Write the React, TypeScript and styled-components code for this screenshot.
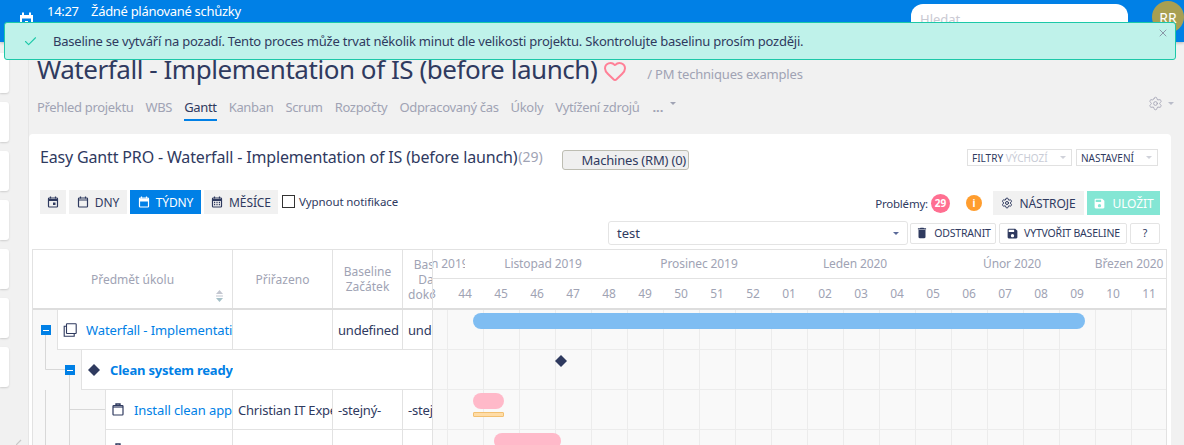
import * as React from 'react';
import styled, { createGlobalStyle } from 'styled-components';
import { Check, Heart, Settings, X } from 'lucide-react';
import { MdDelete, MdSave } from 'react-icons/md';

const navy = '#2f3a5f';
const muted = '#a0a3b4';
const blue = '#0080e6';
const line = '#e2e2e2';

const GlobalStyle = createGlobalStyle`
  html, body {
    margin: 0;
    padding: 0;
    background: #f1f1f1;
  }
  * {
    box-sizing: border-box;
  }
  body {
    font-family: "Noto Sans", "Open Sans", sans-serif;
    font-size: 13px;
    color: ${navy};
  }
`;

const Page = styled.div`
  position: relative;
  width: 1184px;
  height: 445px;
  overflow: hidden;
  background: #f1f1f1;
`;

const TopBar = {
  Container: styled.header`
    display: flex;
    align-items: flex-start;
    height: 42px;
    padding-left: 19px;
    background: ${blue};
    box-shadow: 0 1px 3px rgba(0, 0, 0, 0.25);
    color: #fff;
  `,
  Calendar: styled.svg`
    flex: none;
    margin-top: 12px;
  `,
  Agenda: styled.div`
    display: grid;
    grid-template-columns: 44px auto;
    margin-left: 13px;
    padding-top: 2px;
    line-height: 18px;
    font-size: 13px;
    letter-spacing: -0.3px;
  `,
  Search: styled.div`
    width: 217px;
    height: 34px;
    margin: 4px 24px 0 auto;
    padding: 5px 9px;
    border-radius: 12px;
    background: #fff;
    color: #c9c9d2;
    font-size: 13px;
    line-height: 20px;
  `,
  Avatar: styled.div`
    display: flex;
    align-items: center;
    justify-content: center;
    flex: none;
    width: 32px;
    height: 32px;
    margin: 1px 0 0 0;
    border-radius: 50%;
    background: #a89f52;
    color: #fff;
    font-size: 14px;
  `,
};

const Alert = {
  Box: styled.div`
    position: absolute;
    top: 22px;
    left: 4px;
    display: flex;
    align-items: center;
    width: 1172px;
    height: 38px;
    padding-left: 18px;
    border: 1px solid #1cc8a8;
    border-radius: 3px;
    background: #bff2ea;
    color: ${navy};
    letter-spacing: -0.22px;
  `,
  Text: styled.span`
    margin-left: 15px;
  `,
  Close: styled.span`
    position: absolute;
    top: 4px;
    right: 6px;
    display: flex;
    color: #8a97a8;
  `,
};

const Body = styled.div`
  display: flex;
  height: 403px;
`;

const Sidebar = {
  Container: styled.aside`
    position: relative;
    flex: none;
    width: 29px;
    padding-top: 11px;
    border-right: 1px solid #e6e6e6;
  `,
  Item: styled.div`
    width: 9px;
    height: 40px;
    margin-bottom: 9px;
    border-radius: 0 3px 3px 0;
    background: #fff;
    box-shadow: 0 1px 2px rgba(0, 0, 0, 0.15);
  `,
  Resize: styled.svg`
    position: absolute;
    left: 16px;
    bottom: 0;
  `,
};

const Main = styled.main`
  flex: 1;
  min-width: 0;
`;

const PageHead = {
  Row: styled.div`
    display: flex;
    align-items: center;
    height: 36px;
    margin: 9px 0 0 8px;
  `,
  Title: styled.h1`
    margin: 0;
    font-size: 26px;
    font-weight: 400;
    line-height: 36px;
    letter-spacing: -0.45px;
    white-space: nowrap;
  `,
  Favourite: styled.span`
    display: flex;
    margin: 4px 0 0 6px;
    color: #ff8097;
  `,
  Path: styled.span`
    margin: 9px 0 0 20px;
    color: ${muted};
    font-size: 13px;
    letter-spacing: -0.2px;
  `,
};

const Tabs = {
  Row: styled.nav`
    display: flex;
    align-items: flex-start;
    gap: 12px;
    height: 38px;
    margin: 8px 0 0 8px;
    padding-right: 10px;
  `,
  Tab: styled.span<{ $active?: boolean }>`
    height: 26px;
    padding-top: 3px;
    border-bottom: 2px solid ${(p) => (p.$active ? blue : 'transparent')};
    color: ${(p) => (p.$active ? navy : muted)};
    line-height: 18px;
    letter-spacing: -0.33px;
    white-space: nowrap;
  `,
  More: styled.span`
    margin-left: 1px;
    color: ${muted};
    font-weight: 700;
    line-height: 24px;
  `,
  MoreCaret: styled.span`
    display: flex;
    margin: 7px 0 0 -5px;
  `,
  Settings: styled.span`
    display: flex;
    align-items: center;
    gap: 5px;
    margin: 1px 0 0 auto;
    color: #a8a8b8;
  `,
};

const Caret = styled.i<{ $color?: string }>`
  display: inline-block;
  flex: none;
  width: 0;
  height: 0;
  border-left: 3px solid transparent;
  border-right: 3px solid transparent;
  border-top: 3px solid ${(p) => p.$color ?? '#b9bcc9'};
`;

const Card = styled.section`
  height: 320px;
  margin: 1px 13px 0 0;
  border-radius: 4px 4px 0 0;
  background: #fff;
  overflow: hidden;
`;

const CardHead = {
  Row: styled.div`
    display: flex;
    align-items: flex-start;
    height: 56px;
    padding: 0 13px 0 11px;
  `,
  Title: styled.h2`
    margin: 13px 0 0;
    font-size: 16px;
    font-weight: 400;
    line-height: 20px;
    letter-spacing: -0.16px;
    white-space: nowrap;
  `,
  Count: styled.span`
    margin: 13px 0 0 1px;
    color: ${muted};
    font-size: 14px;
    line-height: 20px;
  `,
  Machines: styled.button`
    width: 127px;
    height: 20px;
    margin: 16px 0 0 19px;
    padding: 0 0 0 17px;
    border: 1px solid #bdbdb2;
    border-radius: 3px;
    background: #efefef;
    color: ${navy};
    font: inherit;
    letter-spacing: -0.2px;
    white-space: nowrap;
  `,
  Select: styled.div<{ $w: number; $first?: boolean }>`
    display: flex;
    align-items: center;
    justify-content: space-between;
    width: ${(p) => p.$w}px;
    height: 17px;
    margin: 15px 0 0 ${(p) => (p.$first ? 'auto' : '4px')};
    padding: 0 5px 0 4px;
    border: 1px solid #e1e1e1;
    color: ${navy};
    font-size: 10px;
    white-space: nowrap;
  `,
  Faint: styled.span`
    color: #c9ccd6;
  `,
};

const Toolbar = styled.div`
  display: flex;
  align-items: flex-start;
  height: 25px;
  padding: 0 11px;
`;

const ToolbarEnd = styled.div`
  display: flex;
  align-items: center;
  height: 24px;
  margin: 1px 0 0 auto;
`;

const ToolButton = styled.button<{ $w: number; $active?: boolean; $save?: boolean; $gap?: number }>`
  display: flex;
  align-items: center;
  justify-content: center;
  gap: 6px;
  flex: none;
  width: ${(p) => p.$w}px;
  height: 24px;
  margin-right: ${(p) => p.$gap ?? 3}px;
  padding: 0;
  border: 0;
  background: ${(p) => (p.$active ? blue : p.$save ? '#84e6d4' : '#f1f1f1')};
  color: ${(p) => (p.$active || p.$save ? '#fff' : navy)};
  font: inherit;
  font-size: 12px;
  letter-spacing: -0.1px;
`;

const Notify = styled.label`
  display: flex;
  align-items: center;
  gap: 4px;
  height: 23px;
  margin-left: 1px;
  font-size: 11.5px;
  letter-spacing: -0.1px;
`;

const NotifyBox = styled.span`
  width: 13px;
  height: 13px;
  border: 1px solid #333;
`;

const Problems = styled.span`
  font-size: 11.5px;
  letter-spacing: -0.2px;
`;

const Badge = styled.span<{ $color: string; $size: number }>`
  display: flex;
  align-items: center;
  justify-content: center;
  flex: none;
  width: ${(p) => p.$size}px;
  height: ${(p) => p.$size}px;
  border-radius: 50%;
  background: ${(p) => p.$color};
  color: #fff;
  font-size: 10px;
  font-weight: 700;
`;

const ProblemBadge = styled(Badge)`
  margin: 0 16px 0 3px;
`;

const InfoBadge = styled(Badge)`
  margin-right: 11px;
`;

const BaselineRow = styled.div`
  display: flex;
  align-items: center;
  justify-content: flex-end;
  height: 24px;
  margin-top: 6px;
  padding: 0 11px 0 0;
`;

const BaselineSelect = styled.div`
  display: flex;
  align-items: center;
  justify-content: space-between;
  width: 300px;
  height: 24px;
  margin-right: 2px;
  padding: 0 8px;
  border: 1px solid #e4e4e4;
  border-radius: 3px;
  font-size: 13px;
`;

const OutlineButton = styled.button<{ $w: number }>`
  display: flex;
  align-items: center;
  justify-content: center;
  gap: 5px;
  flex: none;
  width: ${(p) => p.$w}px;
  height: 21px;
  margin-left: 3px;
  padding: 0;
  border: 1px solid #e4e4e4;
  border-radius: 2px;
  background: #fff;
  color: ${navy};
  font: inherit;
  font-size: 10.5px;
  letter-spacing: -0.2px;
  white-space: nowrap;
  &:first-of-type {
    margin-left: 0;
  }
`;

const Chart = styled.div`
  display: flex;
  margin: 4px 4px 0 3px;
  border-top: 1px solid ${line};
  border-right: 1px solid ${line};
`;

const TableSide = styled.div`
  flex: none;
  width: 400px;
  overflow: hidden;
  border-left: 1px solid ${line};
`;

const columns = '200px 100px 70px 70px';

const Head = {
  Row: styled.div`
    display: grid;
    grid-template-columns: ${columns};
    height: 60px;
    border-bottom: 2px solid #ddd;
  `,
  Cell: styled.div`
    position: relative;
    display: flex;
    align-items: center;
    justify-content: center;
    border-right: 1px solid ${line};
    color: ${muted};
    font-size: 12px;
    line-height: 15px;
    text-align: center;
    overflow: hidden;
  `,
  Sort: styled.svg`
    position: absolute;
    right: 8px;
    bottom: 6px;
  `,
};

const Tree = {
  Body: styled.div`
    position: relative;
    background: #f8f8f8;
  `,
  Guides: styled.svg`
    position: absolute;
    top: 0;
    left: 0;
  `,
  Row: styled.div`
    display: grid;
    grid-template-columns: ${columns};
    height: 40px;
  `,
  Name: styled.div<{ $depth: number; $span?: boolean }>`
    position: relative;
    display: flex;
    align-items: center;
    gap: ${(p) => (p.$depth > 0 ? 10 : 9)}px;
    grid-column: ${(p) => (p.$span ? '1 / -1' : 'auto')};
    margin-left: ${(p) => 24 + p.$depth * 24}px;
    padding-left: ${(p) => (p.$depth > 0 ? 6 : 5)}px;
    border-left: 1px solid ${line};
    border-bottom: 1px solid ${line};
    border-right: 1px solid ${line};
    background: #fff;
    min-width: 0;
    & > svg {
      flex: none;
    }
  `,
  Link: styled.a<{ $bold?: boolean }>`
    color: ${blue};
    font-weight: ${(p) => (p.$bold ? 700 : 400)};
    letter-spacing: ${(p) => (p.$bold ? '-0.2px' : '-0.1px')};
    white-space: nowrap;
    overflow: hidden;
  `,
  Toggle: styled.span`
    position: absolute;
    top: 15px;
    left: -17px;
    display: flex;
    align-items: center;
    justify-content: center;
    width: 10px;
    height: 10px;
    background: ${blue};
    &::after {
      content: '';
      width: 6px;
      height: 1px;
      background: #fff;
    }
  `,
  Cell: styled.div`
    display: flex;
    align-items: center;
    padding-left: 5px;
    border-right: 1px solid ${line};
    border-bottom: 1px solid ${line};
    background: #fff;
    font-size: 13px;
    letter-spacing: -0.2px;
    white-space: nowrap;
    overflow: hidden;
  `,
};

const GanttSide = styled.div`
  flex: 1;
  min-width: 0;
  overflow: hidden;
  border-left: 1px solid ${line};
`;

const Timeline = {
  Strip: styled.div`
    width: 756px;
    margin-left: -22px;
    background: #fff;
  `,
  Months: styled.div`
    display: flex;
    height: 29px;
    border-bottom: 1px solid ${line};
  `,
  Month: styled.div<{ $w: number }>`
    flex: none;
    width: ${(p) => p.$w}px;
    overflow: hidden;
    color: ${muted};
    font-size: 12px;
    line-height: 28px;
    text-align: center;
    white-space: nowrap;
    letter-spacing: -0.1px;
  `,
  Weeks: styled.div`
    display: flex;
    height: 31px;
    border-bottom: 2px solid #ddd;
  `,
  Week: styled.div`
    flex: none;
    width: 36px;
    color: ${muted};
    font-size: 12px;
    line-height: 29px;
    text-align: center;
  `,
};

const GanttBody = styled.div`
  position: relative;
  height: 140px;
  background-color: #f9f9f9;
  background-image:
    linear-gradient(to right, #ececec 1px, transparent 1px),
    linear-gradient(to bottom, #ececec 1px, transparent 1px);
  background-size: 36px 100%, 100% 40px;
  background-position: 14px 0, 0 39px;
`;

const Bar = styled.div<{ $left: number; $top: number; $w: number; $color: string }>`
  position: absolute;
  left: ${(p) => p.$left}px;
  top: ${(p) => p.$top}px;
  width: ${(p) => p.$w}px;
  height: 16px;
  border-radius: 8px;
  background: ${(p) => p.$color};
`;

const BaselineBar = styled.div<{ $left: number; $top: number; $w: number }>`
  position: absolute;
  left: ${(p) => p.$left}px;
  top: ${(p) => p.$top}px;
  width: ${(p) => p.$w}px;
  height: 5px;
  border: 1px solid #f2c071;
  border-radius: 1px;
  background: #ffdca6;
`;

const Milestone = styled.svg<{ $left: number; $top: number }>`
  position: absolute;
  left: ${(p) => p.$left}px;
  top: ${(p) => p.$top}px;
`;

type CalendarKind = 'today' | 'day' | 'week' | 'month';

const CalendarIcon = ({ kind, size = 12 }: { kind: CalendarKind; size?: number }) => (
  <svg width={size} height={size} viewBox="0 0 12 12" fill="none" stroke="currentColor">
    <rect x="1.5" y="2" width="9" height="9" rx="0.8" strokeWidth="1.2" />
    <path d="M3.5 0.5v2M8.5 0.5v2" strokeWidth="1.2" />
    <path d="M1.5 4h9" strokeWidth={kind === 'day' ? 1.2 : 1.8} />
    {kind === 'today' && <rect x="6" y="6.5" width="2.5" height="2.5" fill="currentColor" stroke="none" />}
    {kind === 'week' && <rect x="1.5" y="2.5" width="9" height="3" fill="currentColor" stroke="none" />}
    {kind === 'month' && (
      <path d="M3 6.5h1.2M5.4 6.5h1.2M7.8 6.5h1.2M3 8.7h1.2M5.4 8.7h1.2M7.8 8.7h1.2" strokeWidth="1.3" />
    )}
  </svg>
);

const ClipboardIcon = () => (
  <svg width="12" height="13" viewBox="0 0 12 13" fill="none" stroke={navy} strokeWidth="1.2">
    <rect x="1" y="2.5" width="10" height="9.5" rx="0.8" />
    <path d="M4 2.5V1h4v1.5" strokeWidth="1.4" />
    <path d="M1 4h10" />
  </svg>
);

const CopyIcon = () => (
  <svg width="14" height="14" viewBox="0 0 14 14" fill="none" stroke={navy} strokeWidth="1.1">
    <rect x="3.5" y="0.8" width="9.7" height="9.7" rx="0.6" />
    <path d="M3.5 3.2H1.2v10h10V10.5" />
  </svg>
);

const DiamondPath = () => <path d="M6 0L12 6L6 12L0 6Z" fill={navy} />;

const months = [
  { label: 'Říjen 2019', w: 54 },
  { label: 'Listopad 2019', w: 156 },
  { label: 'Prosinec 2019', w: 156 },
  { label: 'Leden 2020', w: 156 },
  { label: 'Únor 2020', w: 158 },
  { label: 'Březen 2020', w: 76 },
];

const weeks = ['43', '44', '45', '46', '47', '48', '49', '50', '51', '52', '01', '02', '03', '04', '05', '06', '07', '08', '09', '10', '11'];

const tabs = ['Přehled projektu', 'WBS', 'Gantt', 'Kanban', 'Scrum', 'Rozpočty', 'Odpracovaný čas', 'Úkoly', 'Vytížení zdrojů'];

const App = () => {
  return (
    <Page>
      <GlobalStyle />
      <TopBar.Container>
        <TopBar.Calendar width="15" height="18" viewBox="0 0 15 18" fill="#fff">
          <path d="M1 3h13v14H1zM3 6.500v8.500h9V6.500z" fillRule="evenodd" />
          <rect x="3" y="0.500" width="2" height="3" />
          <rect x="10" y="0.500" width="2" height="3" />
          <rect x="6" y="9" width="3" height="3" />
        </TopBar.Calendar>
        <TopBar.Agenda>
          <span>14:27</span>
          <span>Žádné plánované schůzky</span>
        </TopBar.Agenda>
        <TopBar.Search>Hledat</TopBar.Search>
        <TopBar.Avatar>RR</TopBar.Avatar>
      </TopBar.Container>

      <Body>
        <Sidebar.Container>
          {[0, 1, 2, 3, 4, 5, 6].map((n) => (
            <Sidebar.Item key={n} />
          ))}
          <Sidebar.Resize width="6" height="6" viewBox="0 0 6 6">
            <path d="M0 6L5 1" stroke="#c8c8c8" strokeWidth="1.2" />
          </Sidebar.Resize>
        </Sidebar.Container>

        <Main>
          <PageHead.Row>
            <PageHead.Title>Waterfall - Implementation of IS (before launch)</PageHead.Title>
            <PageHead.Favourite>
              <Heart size={24} strokeWidth={2} />
            </PageHead.Favourite>
            <PageHead.Path>/ PM techniques examples</PageHead.Path>
          </PageHead.Row>

          <Tabs.Row>
            {tabs.map((tab) => (
              <Tabs.Tab key={tab} $active={tab === 'Gantt'}>
                {tab}
              </Tabs.Tab>
            ))}
            <Tabs.More>...</Tabs.More>
            <Tabs.MoreCaret>
              <Caret $color="#a0a3b4" />
            </Tabs.MoreCaret>
            <Tabs.Settings>
              <Settings size={15} strokeWidth={1.5} />
              <Caret />
            </Tabs.Settings>
          </Tabs.Row>

          <Card>
            <CardHead.Row>
              <CardHead.Title>Easy Gantt PRO - Waterfall - Implementation of IS (before launch)</CardHead.Title>
              <CardHead.Count>(29)</CardHead.Count>
              <CardHead.Machines>Machines (RM) (0)</CardHead.Machines>
              <CardHead.Select $w={105} $first>
                <span>
                  FILTRY <CardHead.Faint>VÝCHOZÍ</CardHead.Faint>
                </span>
                <Caret $color="#d0d2da" />
              </CardHead.Select>
              <CardHead.Select $w={82}>
                <span>NASTAVENÍ</span>
                <Caret $color="#d0d2da" />
              </CardHead.Select>
            </CardHead.Row>

            <Toolbar>
              <ToolButton $w={26}>
                <CalendarIcon kind="today" />
              </ToolButton>
              <ToolButton $w={58}>
                <CalendarIcon kind="day" />
                DNY
              </ToolButton>
              <ToolButton $w={71} $active>
                <CalendarIcon kind="week" />
                TÝDNY
              </ToolButton>
              <ToolButton $w={74}>
                <CalendarIcon kind="month" />
                MĚSÍCE
              </ToolButton>
              <Notify>
                <NotifyBox />
                Vypnout notifikace
              </Notify>
              <ToolbarEnd>
                <Problems>Problémy:</Problems>
                <ProblemBadge $color="#ff6f91" $size={19}>
                  29
                </ProblemBadge>
                <InfoBadge $color="#ff9d2e" $size={16}>
                  i
                </InfoBadge>
                <ToolButton $w={91}>
                  <Settings size={12} strokeWidth={2} />
                  NÁSTROJE
                </ToolButton>
                <ToolButton $w={73} $gap={0} $save>
                  <MdSave size={13} />
                  ULOŽIT
                </ToolButton>
              </ToolbarEnd>
            </Toolbar>

            <BaselineRow>
              <BaselineSelect>
                test
                <Caret $color="#5b6a99" />
              </BaselineSelect>
              <OutlineButton $w={86}>
                <MdDelete size={14} />
                ODSTRANIT
              </OutlineButton>
              <OutlineButton $w={128}>
                <MdSave size={13} />
                VYTVOŘIT BASELINE
              </OutlineButton>
              <OutlineButton $w={30}>?</OutlineButton>
            </BaselineRow>

            <Chart>
              <TableSide>
                <Head.Row>
                  <Head.Cell>
                    Předmět úkolu
                    <Head.Sort width="9" height="12" viewBox="0 0 9 12">
                      <path d="M4.500 0L8 4H1z" fill="#c3c6d0" />
                      <path d="M1 6h7" stroke="#c3c6d0" />
                      <path d="M4.500 12L8 8H1z" fill="#a5c0c8" />
                    </Head.Sort>
                  </Head.Cell>
                  <Head.Cell>Přiřazeno</Head.Cell>
                  <Head.Cell>
                    Baseline
                    <br />
                    Začátek
                  </Head.Cell>
                  <Head.Cell>
                    Baseline
                    <br />
                    Datum
                    <br />
                    dokončení
                  </Head.Cell>
                </Head.Row>

                <Tree.Body>
                  <Tree.Guides width="100" height="140" stroke="#d8d8d8" fill="none">
                    <path d="M12.500 25V59.500H33M12.500 80V140M36.500 65V140M36.500 99.500H73" />
                  </Tree.Guides>
                  <Tree.Row>
                    <Tree.Name $depth={0}>
                      <Tree.Toggle />
                      <CopyIcon />
                      <Tree.Link>Waterfall - Implementation of IS (before launch)</Tree.Link>
                    </Tree.Name>
                    <Tree.Cell />
                    <Tree.Cell>undefined</Tree.Cell>
                    <Tree.Cell>undefined</Tree.Cell>
                  </Tree.Row>
                  <Tree.Row>
                    <Tree.Name $depth={1} $span>
                      <Tree.Toggle />
                      <svg width="12" height="12" viewBox="0 0 12 12">
                        <DiamondPath />
                      </svg>
                      <Tree.Link $bold>Clean system ready</Tree.Link>
                    </Tree.Name>
                  </Tree.Row>
                  <Tree.Row>
                    <Tree.Name $depth={2}>
                      <ClipboardIcon />
                      <Tree.Link>Install clean application</Tree.Link>
                    </Tree.Name>
                    <Tree.Cell>Christian IT Expert</Tree.Cell>
                    <Tree.Cell>-stejný-</Tree.Cell>
                    <Tree.Cell>-stejný-</Tree.Cell>
                  </Tree.Row>
                  <Tree.Row>
                    <Tree.Name $depth={2}>
                      <ClipboardIcon />
                    </Tree.Name>
                    <Tree.Cell />
                    <Tree.Cell />
                    <Tree.Cell />
                  </Tree.Row>
                </Tree.Body>
              </TableSide>

              <GanttSide>
                <Timeline.Strip>
                  <Timeline.Months>
                    {months.map((m) => (
                      <Timeline.Month key={m.label} $w={m.w}>
                        {m.label}
                      </Timeline.Month>
                    ))}
                  </Timeline.Months>
                  <Timeline.Weeks>
                    {weeks.map((w) => (
                      <Timeline.Week key={w}>{w}</Timeline.Week>
                    ))}
                  </Timeline.Weeks>
                </Timeline.Strip>
                <GanttBody>
                  <Bar $left={40} $top={3} $w={612} $color="#7fbdf2" />
                  <Milestone $left={122} $top={45} width="12" height="12" viewBox="0 0 12 12">
                    <DiamondPath />
                  </Milestone>
                  <Bar $left={40} $top={83} $w={31} $color="#ffb9c9" />
                  <BaselineBar $left={40} $top={102} $w={31} />
                  <Bar $left={61} $top={123} $w={67} $color="#ffb9c9" />
                </GanttBody>
              </GanttSide>
            </Chart>
          </Card>
        </Main>
      </Body>

      <Alert.Box>
        <Check size={15} color="#1cc8a8" strokeWidth={1.7} />
        <Alert.Text>
          Baseline se vytváří na pozadí. Tento proces může trvat několik minut dle velikosti projektu. Skontrolujte baselinu prosím později.
        </Alert.Text>
        <Alert.Close>
          <X size={12} />
        </Alert.Close>
      </Alert.Box>
    </Page>
  );
};

export default App;
